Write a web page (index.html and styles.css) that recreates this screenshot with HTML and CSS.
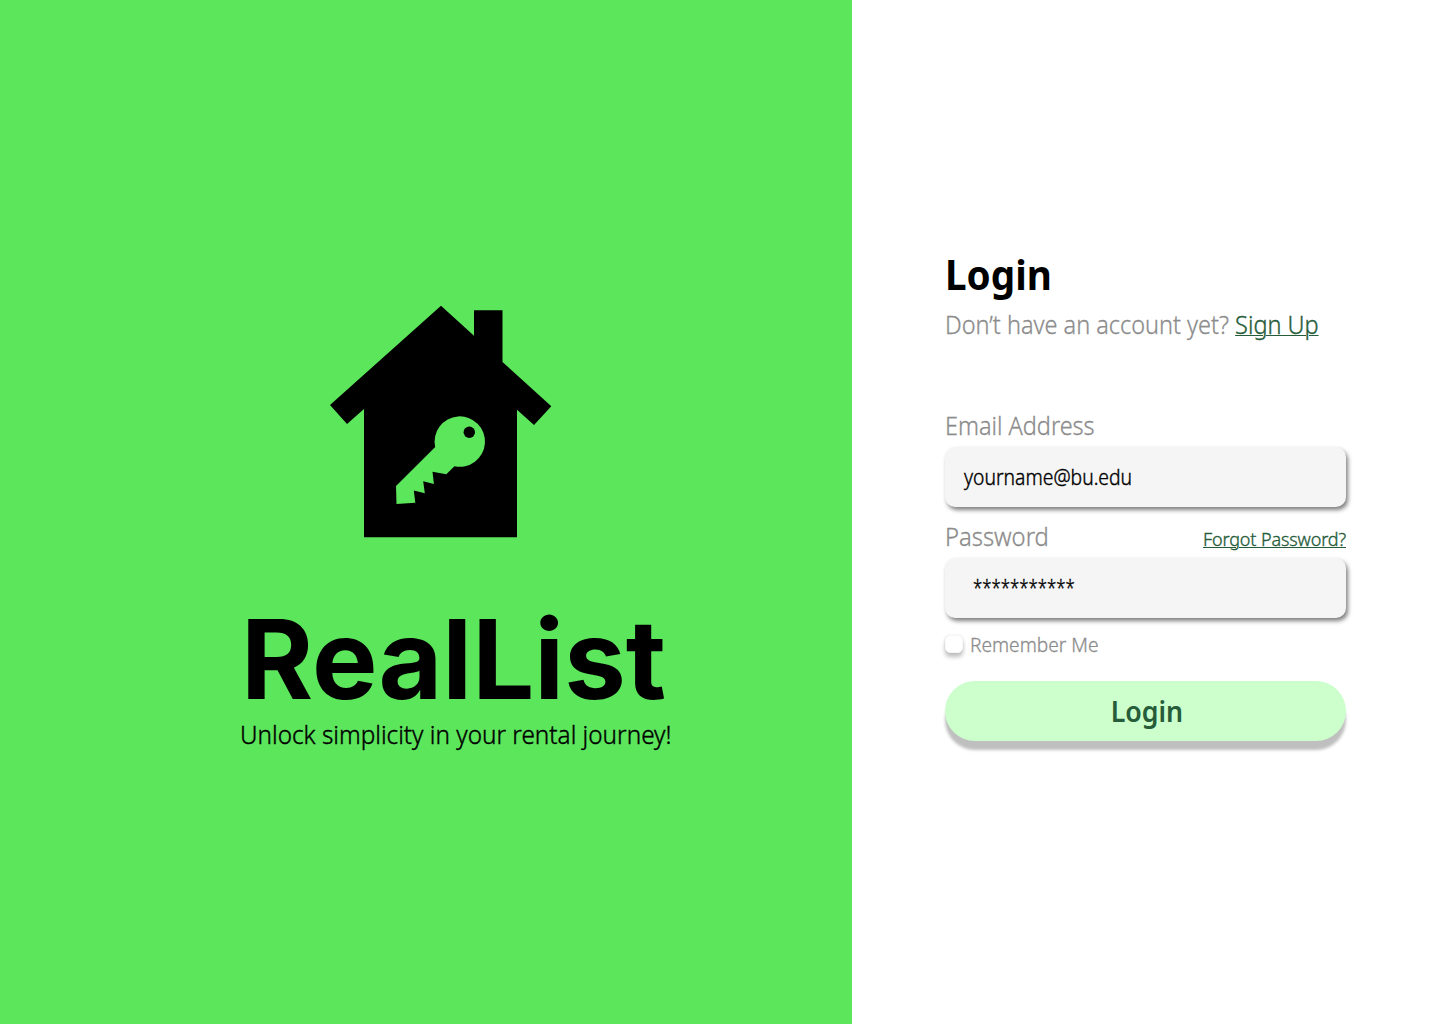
FILE: index.html
```html
<!DOCTYPE html>
<html lang="en">
<head>
<meta charset="utf-8">
<title>RealList – Login</title>
<link rel="stylesheet" href="styles.css">
</head>
<body>
<main class="page">
  <section class="brand">
    <svg class="logo" viewBox="330 305 222 233" aria-hidden="true">
      <path d="M441 305.7 474 335.7V310.3H502.5V362L551.3 406.3 534 425 517 409.7V537.3H364V409L347 424 330 405Z"/>
      <path class="key" d="M435.2 447A25.2 25.2 0 1 1 454.5 466.2L446.3 474.3 432.5 471.7 433.9 484 423.2 481.2 424.8 493.2 413.8 490.4 415.3 502.8 396.5 504 396 486Z"/>
      <circle cx="469.3" cy="432.2" r="5.7"/>
    </svg>
    <h1 class="name">RealList</h1>
    <p class="tagline">Unlock simplicity in your rental journey!</p>
  </section>
  <section class="panel">
    <form class="form">
      <h2 class="title">Login</h2>
      <p class="signup">Don’t have an account yet? <a class="link" href="#">Sign Up</a></p>
      <div class="row"><span class="label">Email Address</span></div>
      <div class="field"><span class="value">yourname@bu.edu</span></div>
      <div class="row row-password"><span class="label label-password">Password</span><a class="forgot link" href="#">Forgot Password?</a></div>
      <div class="field field-password"><span class="value mask">***********</span></div>
      <div class="remember"><span class="check"></span><span class="remember-text">Remember Me</span></div>
      <button class="submit" type="button"><span class="submit-text">Login</span></button>
    </form>
  </section>
</main>
</body>
</html>
```
FILE: styles.css
```css
* { box-sizing: border-box; }
body { margin: 0; font-family: "Noto Sans", sans-serif; background: #fff; }
h1, h2, p { margin: 0; }
.page { display: grid; grid-template-columns: 852px 1fr; height: 1024px; overflow: hidden; }
.brand { background: #5ce65c; padding: 305px 0 0 240px; }
.logo { display: block; width: 222px; height: 233px; margin-left: 90px; }
.key { fill: #5ce65c; }
.name { font: 700 110px/120px Inter, sans-serif; margin-top: 61px; margin-left: 1px; white-space: nowrap; }

/* Text is set slightly narrow */
.tagline, .title, .signup, .label, .value, .remember-text { transform-origin: 0 50%; white-space: nowrap; }
.tagline { font-size: 25px; line-height: 34px; margin-top: -2px; font-weight: 300; -webkit-text-stroke: .4px; transform: scaleX(.972); }
.panel { padding: 245px 94px 0 93px; }
.form { width: 401px; }
.title { font-size: 42px; line-height: 58px; font-weight: 700; transform: scaleX(.92); }
.signup { font-size: 25px; line-height: 34px; margin-top: 4px; color: #8c8c8c; font-weight: 300; -webkit-text-stroke: .3px; transform: scaleX(.939); }
.link { color: #265c39; text-decoration: underline; text-decoration-thickness: 1px; text-underline-offset: 1px; font-weight: 300; -webkit-text-stroke: .35px; }
.row { display: flex; justify-content: space-between; align-items: baseline; height: 34px; line-height: 34px; margin-top: 67px; }
.row-password { margin-top: 12px; }
.label { font-size: 25px; font-weight: 300; color: #8c8c8c; -webkit-text-stroke: .3px; transform: scaleX(.938); }
.label-password { transform: scaleX(.952); }
.forgot { font-size: 18px; letter-spacing: -.12px; }
.field { height: 60px; margin-top: 5px; padding-left: 19px; line-height: 60px; font-size: 21px; font-weight: 300; -webkit-text-stroke: .4px; border-radius: 10px; background: #f5f5f5; box-shadow: 2px 3px 4px rgba(0,0,0,.5); }
.value { display: inline-block; transform: scaleX(.92); }
.field-password { padding-left: 28px; line-height: 58px; }
.mask { transform: scaleX(.8); }
.remember { display: flex; align-items: center; gap: 7px; height: 30px; margin-top: 11px; font-size: 20px; font-weight: 300; color: #8c8c8c; -webkit-text-stroke: .3px; }
.remember-text { transform: scaleX(.956); }
.check { width: 18px; height: 18px; border: 1px solid #f8f8f8; border-radius: 5px; background: #fff; box-shadow: 0 4px 4px rgba(0,0,0,.25), 0 0 2px rgba(0,0,0,.1); }
.submit { display: flex; justify-content: center; align-items: center; width: 401px; height: 60px; margin-top: 22px; padding: 0 0 0 3px; border: 0; border-radius: 30px; background: #ccffcc; color: #265c39; font: 600 28px "Noto Sans", sans-serif; box-shadow: 0 9px 3px rgba(0,0,0,.25); }
.submit-text { transform: scaleX(.955); }
```
